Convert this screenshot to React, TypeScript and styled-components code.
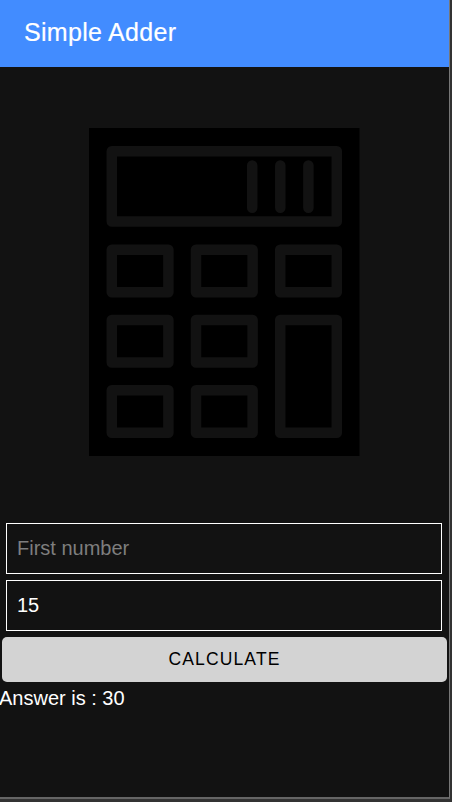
import React, { useState } from 'react';
import styled, { createGlobalStyle } from 'styled-components';

const GlobalStyle = createGlobalStyle`
  * { box-sizing: border-box; }
  html, body { margin: 0; height: 100%; overflow: hidden; background: #333333; }
  body { font-family: "Liberation Sans", Arial, sans-serif; }
`;

const Screen = styled.div`
  display: flex;
  flex-direction: column;
  width: 450px;
  height: 799px;
  background: #121212;
  border-right: 1px solid #777777;
  border-bottom: 2px solid #656565;
  color: #ffffff;
  overflow: hidden;
`;

const Toolbar = styled.header`
  display: flex;
  align-items: center;
  flex: 0 0 67px;
  padding: 0 24px 3px;
  background: #428cff;
`;

const Title = styled.h1`
  margin: 0;
  font-size: 25px;
  font-weight: 400;
  line-height: 30px;
  letter-spacing: 0.3px;
  -webkit-text-stroke: 0.2px currentColor;
`;

const Artwork = styled.div`
  display: flex;
  justify-content: center;
  flex: 0 0 456px;
  padding-top: 61px;
`;

const CalculatorSvg = styled.svg`
  display: block;
  width: 271px;
  height: 328px;
  overflow: visible;
  filter: blur(0.6px);
`;

const Fields = styled.div`
  display: flex;
  flex-direction: column;
  gap: 6px;
  padding: 0 7px 0 6px;
`;

const NumberInput = styled.input`
  width: 100%;
  height: 51px;
  padding: 0 10px;
  border: 1px solid #ffffff;
  border-radius: 0;
  outline: none;
  background: transparent;
  color: #ffffff;
  font: 20px "Liberation Sans", Arial, sans-serif;

  &::placeholder { color: #7e7e7e; opacity: 1; }
`;

const CalculateButton = styled.button`
  flex: 0 0 45px;
  margin: 6px 2px 0;
  padding: 0;
  border: 0;
  border-radius: 5px;
  background: #d3d3d3;
  color: #000000;
  font: 17.5px "Liberation Sans", Arial, sans-serif;
  letter-spacing: 1.15px;
  text-transform: uppercase;
`;

const Answer = styled.p`
  margin: 4px 0 0 -1px;
  font-size: 20px;
  line-height: 24px;
`;

const keys = [
  [22.8, 121.7], [107, 121.7], [191.2, 121.7],
  [22.8, 192], [107, 192],
  [22.8, 262.3], [107, 262.3],
];

function CalculatorIcon() {
  return (
    <CalculatorSvg viewBox="0 0 271 328" aria-hidden="true">
      <rect width="270.5" height="328" fill="#000000" />
      <g fill="none" stroke="#121212" strokeWidth="10.5" strokeLinejoin="round" strokeLinecap="round">
        <rect x="22.8" y="23.3" width="225" height="70.3" />
        {keys.map(([x, y]) => (
          <rect key={`${x}-${y}`} x={x} y={y} width="56.6" height="42.5" />
        ))}
        <rect x="191.2" y="192" width="56.6" height="112.8" />
        <path d="M163.2 37.5v42.2M191.3 37.5v42.2M219.4 37.5v42.2" />
      </g>
    </CalculatorSvg>
  );
}

export default function App() {
  const [first, setFirst] = useState('');
  const [second, setSecond] = useState('15');
  const [answer, setAnswer] = useState(30);

  return (
    <>
      <GlobalStyle />
      <Screen>
        <Toolbar>
          <Title>Simple Adder</Title>
        </Toolbar>
        <Artwork>
          <CalculatorIcon />
        </Artwork>
        <Fields>
          <NumberInput placeholder="First number" value={first} onChange={(e) => setFirst(e.target.value)} />
          <NumberInput placeholder="Second number" value={second} onChange={(e) => setSecond(e.target.value)} />
        </Fields>
        <CalculateButton onClick={() => setAnswer(Number(first) + Number(second))}>Calculate</CalculateButton>
        <Answer>Answer is : {answer}</Answer>
      </Screen>
    </>
  );
}
